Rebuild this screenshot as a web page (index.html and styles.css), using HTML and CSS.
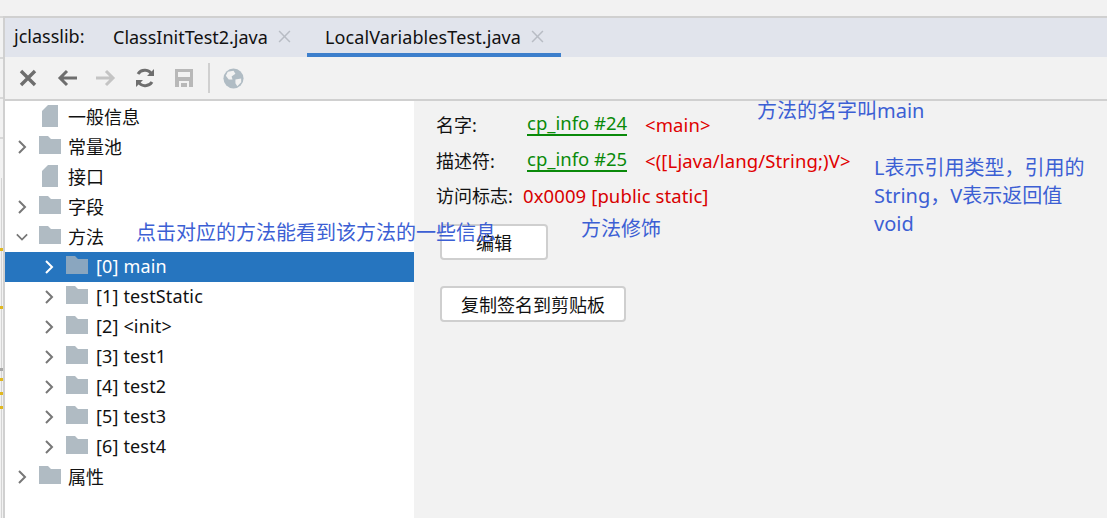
FILE: index.html
```html
<!DOCTYPE html>
<html lang="zh">
<head>
<meta charset="utf-8">
<title>jclasslib</title>
<link rel="stylesheet" href="styles.css">
</head>
<body>
<svg class="defs" width="0" height="0">
  <symbol id="folder" viewBox="0 0 22 18"><path d="M0 0H9L12 3H22V18H0Z"/></symbol>
  <symbol id="file" viewBox="0 0 16 22"><path d="M6 0H16V22H0V6Z"/></symbol>
  <symbol id="chev-r" viewBox="0 0 12 16"><path d="M3 2L9 8L3 14" fill="none" stroke-width="2"/></symbol>
  <symbol id="chev-d" viewBox="0 0 14 12"><path d="M1 3L7 9L13 3" fill="none" stroke-width="2"/></symbol>
  <symbol id="close" viewBox="0 0 12 12"><path d="M1 1L11 11M11 1L1 11" fill="none" stroke-width="1.400"/></symbol>
</svg>
<div class="gutter">
  <i class="stub s1"></i><i class="stub s2"></i><i class="stub s3"></i><i class="stub s4"></i>
  <i class="rail"></i>
  <i class="mark m1"></i><i class="mark m5"></i><i class="mark gray"></i><i class="mark m2"></i><i class="mark m3"></i><i class="mark m4"></i>
</div>
<div class="window">
  <div class="tabs">
    <span class="tabs-label">jclasslib:</span>
    <div class="tab">ClassInitTest2.java<svg class="tab-x"><use href="#close"/></svg></div>
    <div class="tab active">LocalVariablesTest.java<svg class="tab-x"><use href="#close"/></svg></div>
  </div>
  <div class="toolbar">
    <svg class="tool" viewBox="0 0 24 24"><path d="M5 5L19 19M19 5L5 19" fill="none" stroke="#6e6e6e" stroke-width="3.400"/></svg>
    <svg class="tool" viewBox="0 0 24 24"><path d="M22 12H5M12 5L5 12L12 19" fill="none" stroke="#6e6e6e" stroke-width="3"/></svg>
    <svg class="tool" viewBox="0 0 24 24"><path d="M2 12H19M12 5L19 12L12 19" fill="none" stroke="#c4c4c4" stroke-width="3"/></svg>
    <svg class="tool" viewBox="0 0 24 24"><path d="M19 9A8 8 0 0 0 5 8M5 15A8 8 0 0 0 19 16" fill="none" stroke="#6e6e6e" stroke-width="3"/><path d="M14 10H21V3ZM10 14H3V21Z" fill="#6e6e6e"/></svg>
    <svg class="tool" viewBox="0 0 24 24"><path fill-rule="evenodd" d="M3 3H21V21H3ZM6 6V11H18V6ZM7 15V21H17V15Z" fill="#b8b8b8"/><rect x="9" y="17" width="6" height="4" fill="#b8b8b8"/></svg>
    <span class="tool-sep"></span>
    <svg class="tool globe" viewBox="0 0 24 24"><circle cx="12" cy="12" r="10.500" fill="#b0bcc4"/><path d="M6 5L12 4L14 7L10 10L11 13L7 13L4 9ZM14 13L20 12L20 16L16 20L14 17Z" fill="#f2f2f2"/></svg>
  </div>
  <div class="main">
    <div class="tree">
      <div class="row"><span class="tw"></span><svg class="ico-file"><use href="#file"/></svg><span class="label">一般信息</span></div>
      <div class="row"><svg class="tw"><use href="#chev-r"/></svg><svg class="ico"><use href="#folder"/></svg><span class="label">常量池</span></div>
      <div class="row"><span class="tw"></span><svg class="ico-file"><use href="#file"/></svg><span class="label">接口</span></div>
      <div class="row"><svg class="tw"><use href="#chev-r"/></svg><svg class="ico"><use href="#folder"/></svg><span class="label">字段</span></div>
      <div class="row"><svg class="tw"><use href="#chev-d"/></svg><svg class="ico"><use href="#folder"/></svg><span class="label">方法</span></div>
      <div class="row sub selected"><svg class="tw"><use href="#chev-r"/></svg><svg class="ico"><use href="#folder"/></svg><span class="label">[0] main</span></div>
      <div class="row sub"><svg class="tw"><use href="#chev-r"/></svg><svg class="ico"><use href="#folder"/></svg><span class="label">[1] testStatic</span></div>
      <div class="row sub"><svg class="tw"><use href="#chev-r"/></svg><svg class="ico"><use href="#folder"/></svg><span class="label">[2] &lt;init&gt;</span></div>
      <div class="row sub"><svg class="tw"><use href="#chev-r"/></svg><svg class="ico"><use href="#folder"/></svg><span class="label">[3] test1</span></div>
      <div class="row sub"><svg class="tw"><use href="#chev-r"/></svg><svg class="ico"><use href="#folder"/></svg><span class="label">[4] test2</span></div>
      <div class="row sub"><svg class="tw"><use href="#chev-r"/></svg><svg class="ico"><use href="#folder"/></svg><span class="label">[5] test3</span></div>
      <div class="row sub"><svg class="tw"><use href="#chev-r"/></svg><svg class="ico"><use href="#folder"/></svg><span class="label">[6] test4</span></div>
      <div class="row"><svg class="tw"><use href="#chev-r"/></svg><svg class="ico"><use href="#folder"/></svg><span class="label">属性</span></div>
    </div>
    <div class="detail">
      <div class="field"><span class="name">名字:</span><a class="link">cp_info #24</a><span class="val">&lt;main&gt;</span></div>
      <div class="field"><span class="name">描述符:</span><a class="link">cp_info #25</a><span class="val">&lt;([Ljava/lang/String;)V&gt;</span></div>
      <div class="field"><span class="name flags">访问标志:</span><span class="flagval">0x0009 [public static]</span></div>
      <div class="btn btn-edit">编辑</div>
      <div class="btn btn-copy">复制签名到剪贴板</div>
    </div>
  </div>
</div>
<div class="note n1">点击对应的方法能看到该方法的一些信息</div>
<div class="note n2">方法修饰</div>
<div class="note n3">方法的名字叫main</div>
<div class="note n4">L表示引用类型，引用的<br>String，V表示返回值<br>void</div>
</body>
</html>
```
FILE: styles.css
```css
* { box-sizing: border-box; }
html, body { margin: 0; height: 100%; }
body {
  width: 1107px; height: 518px; overflow: hidden;
  background: #f2f2f2; position: relative;
  display: flex;
  padding-top: 16px;
  font-family: "Noto Sans", "Noto Sans CJK SC", sans-serif;
  font-size: 18px; color: #111;
}
.defs { position: absolute; }
.gutter { width: 3px; flex: none; position: relative; margin-top: -16px; }
.stub { position: absolute; left: 0; width: 3px; height: 2px; background: #d8d8d8; }
.s1 { top: 16px; } .s2 { top: 57px; } .s3 { top: 97px; } .s4 { top: 137px; }
.rail { position: absolute; left: 1px; top: 178px; bottom: 0; width: 1px; background: #d4d4d4; }
.mark { position: absolute; left: 0; width: 3px; height: 3px; background: #e0b820; }
.m1 { top: 248px; } .m5 { top: 306px; } .m2 { top: 378px; } .m3 { top: 392px; } .m4 { top: 406px; }
.mark.gray { top: 368px; background: #a8a8a8; }
.window { width: 1104px; border-left: 2px solid #d0d0d0; border-top: 2px solid #d0d0d0; display: flex; flex-direction: column; }
.tabs { height: 39px; background: #e1e4ec; display: flex; align-items: stretch; flex: none; padding-left: 9px; }
.tabs-label { line-height: 37px; width: 89px; }
.tab { display: flex; align-items: center; padding: 0 0 2px 10px; width: 204px; font-size: 18px; white-space: nowrap; }
.tab.active { width: 254px; padding: 2px 0 0 18px; border-bottom: 4px solid #3d7fcc; letter-spacing: 0.100px; }
.tab-x { width: 13px; height: 13px; margin-left: 10px; stroke: #b8bcc4; flex: none; }
.toolbar { height: 44px; flex: none; border-bottom: 2px solid #d0d0d0; display: flex; align-items: center; padding-left: 11px; gap: 15px; }
.tool { width: 24px; height: 24px; flex: none; }
.tool-sep { width: 2px; height: 30px; background: #d0d0d0; margin: 0 -3px; }
.globe { width: 23px; height: 23px; }
.main { flex: 1; display: flex; min-height: 0; }
.tree { width: 409px; background: #fff; padding-top: 1px; flex: none; }
.row { height: 30px; display: flex; align-items: center; padding-left: 11px; fill: #b0bbc3; stroke: #777; white-space: nowrap; }
.label { padding-bottom: 2px; }
.row .ico, .row .ico-file { stroke: none; }
.row.sub { padding-left: 38px; letter-spacing: 0.150px; }
.row.sub .ico { margin-right: 8px; }
.row.selected { background: #2675bf; color: #fff; stroke: #fff; fill: #8aa6bf; }
.tw { width: 12px; height: 16px; flex: none; margin-right: 11px; display: block; }
.ico { width: 22px; height: 18px; flex: none; margin: -4px 7px 0 0; }
.ico-file { width: 16px; height: 22px; flex: none; margin: -2px 10px 0 3px; }
.detail { flex: 1; padding: 5px 0 0 22px; }
.field { height: 36px; display: flex; align-items: center; white-space: nowrap; }
.name { width: 91px; flex: none; }
.name.flags { width: 87px; padding-bottom: 2px; }
.link { color: #0a8a0a; border-bottom: 2px solid #0a8a0a; line-height: 22px; height: 24px; width: 100px; margin-right: 18px; flex: none; font-size: 18.500px; white-space: nowrap; }
.val { color: #e00000; font-size: 18.500px; letter-spacing: 0.120px; }
.flagval { color: #d80000; font-size: 18.500px; letter-spacing: 0.100px; padding-bottom: 2px; }
.btn { background: #fff; border: 2px solid #cfcfcf; border-radius: 4px; height: 36px; display: flex; align-items: center; justify-content: center; margin-left: 4px; }
.btn-edit { width: 108px; margin-top: 10px; }
.btn-copy { width: 186px; margin-top: 26px; }
.note { position: absolute; color: #3c5fd4; font-size: 20px; white-space: nowrap; }
.n1 { left: 136px; top: 217px; }
.n2 { left: 581px; top: 213px; }
.n3 { left: 757px; top: 95px; }
.n4 { left: 874px; top: 154px; line-height: 28px; }
```
